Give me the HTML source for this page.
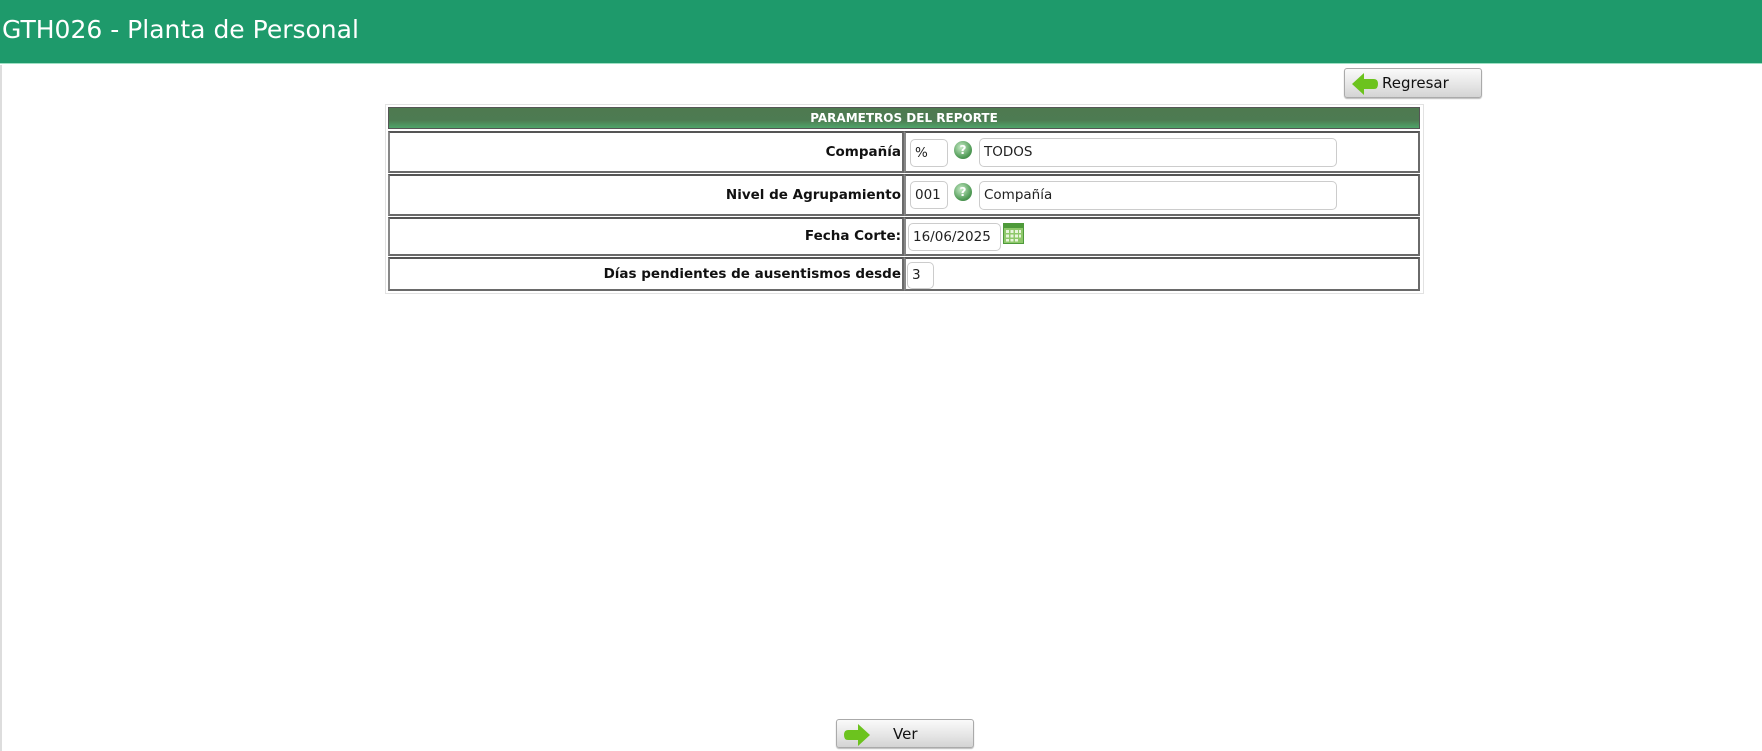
<!DOCTYPE html>
<html><head><meta charset="utf-8"><style>
*{box-sizing:border-box;margin:0;padding:0}
body{width:1762px;height:751px;background:#fff;font-family:"DejaVu Sans","Liberation Sans",sans-serif;position:relative;overflow:hidden}
.hdr{position:absolute;left:0;top:0;width:1762px;height:64px;background:#1e9a6b;border-bottom:1px solid #9fe0c4}
.hdr span{position:absolute;left:2px;top:15px;color:#fff;font-size:25px;font-family:"DejaVu Sans",sans-serif}
.lb{position:absolute;left:0;top:65px;width:2px;height:686px;background:#ddd}
.btn{position:absolute;border:1px solid #aaa;border-radius:3px;background:linear-gradient(#fafafa,#e4e4e4 60%,#d4d4d4);font-size:15px;color:#111;box-shadow:0 1px 1px #bbb}
.btn svg{position:absolute;left:6px;top:3px}
.box{position:absolute;left:385px;top:104px;width:1039px;height:190px;border:1px solid #e2e2e2}
.bar{position:absolute;left:388px;top:107px;width:1032px;height:22px;background:linear-gradient(#4e7a50,#4d7b52 60%,#4fa56a);border:1px solid #555;color:#fff;font-weight:bold;font-size:12px;text-align:center;line-height:20px}
.cell{position:absolute;border:2px solid #6a6a6a;border-top-color:#555;border-left-color:#888}
.lab{font-weight:bold;font-size:13.5px;color:#111;text-align:right;padding-right:1px}
.inp{position:absolute;border:1px solid #ccc;border-radius:5px;background:#fff;font-size:13.5px;padding-left:4px;color:#222}
.help{position:absolute;width:18px;height:18px;border-radius:50%;background:radial-gradient(circle at 40% 35%,#c8ecc8,#4f9a55 65%,#2f7035);color:#fff;font-size:12px;font-weight:bold;text-align:center;line-height:18px}
</style></head><body>
<div class="hdr"><span>GTH026 - Planta de Personal</span></div>
<div class="lb"></div>
<div class="btn" style="left:1344px;top:68px;width:138px;height:30px"><svg width="28" height="24" viewBox="0 0 28 24"><path d="M1 12 L13 1 L13 7 L23 7 Q27 7 27 12 Q27 17 23 17 L13 17 L13 23 Z" fill="#6cc31e"/></svg><span style="position:absolute;left:37px;top:5px">Regresar</span></div>
<div class="box"></div>
<div class="bar">PARAMETROS DEL REPORTE</div>

<div class="cell lab" style="left:388px;top:131px;width:516px;height:42px;line-height:38px">Compañía</div>
<div class="cell" style="left:904px;top:131px;width:516px;height:42px"></div>
<div class="cell lab" style="left:388px;top:174px;width:516px;height:42px;line-height:38px">Nivel de Agrupamiento</div>
<div class="cell" style="left:904px;top:174px;width:516px;height:42px"></div>
<div class="cell lab" style="left:388px;top:217px;width:516px;height:39px;line-height:35px">Fecha Corte:</div>
<div class="cell" style="left:904px;top:217px;width:516px;height:39px"></div>
<div class="cell lab" style="left:388px;top:257px;width:516px;height:34px;line-height:30px">Días pendientes de ausentismos desde</div>
<div class="cell" style="left:904px;top:257px;width:516px;height:34px"></div>

<div class="inp" style="left:910px;top:139px;width:38px;height:28px;line-height:26px">%</div>
<div class="help" style="left:954px;top:141px">?</div>
<div class="inp" style="left:979px;top:138px;width:358px;height:29px;line-height:27px">TODOS</div>
<div class="inp" style="left:910px;top:181px;width:38px;height:28px;line-height:26px">001</div>
<div class="help" style="left:954px;top:183px">?</div>
<div class="inp" style="left:979px;top:181px;width:358px;height:29px;line-height:27px">Compañía</div>
<div class="inp" style="left:908px;top:223px;width:93px;height:28px;line-height:26px">16/06/2025</div>
<svg style="position:absolute;left:1003px;top:223px" width="21" height="21" viewBox="0 0 21 21"><rect x="0.5" y="0.5" width="20" height="20" fill="#8ec86a" stroke="#4e9a3a"/><rect x="1" y="1" width="19" height="4" fill="#4e9a3a"/><g fill="#e8f5dc"><rect x="3" y="7" width="3" height="3"/><rect x="7.5" y="7" width="3" height="3"/><rect x="12" y="7" width="3" height="3"/><rect x="16" y="7" width="2" height="3"/><rect x="3" y="11.5" width="3" height="3"/><rect x="7.5" y="11.5" width="3" height="3"/><rect x="12" y="11.5" width="3" height="3"/><rect x="16" y="11.5" width="2" height="3"/><rect x="3" y="16" width="3" height="2.5"/><rect x="7.5" y="16" width="3" height="2.5"/><rect x="12" y="16" width="3" height="2.5"/></g></svg>
<div class="inp" style="left:907px;top:262px;width:27px;height:27px;line-height:25px">3</div>

<div class="btn" style="left:836px;top:719px;width:138px;height:29px"><svg width="28" height="24" viewBox="0 0 28 24"><path d="M27 12 L15 1 L15 7 L5 7 Q1 7 1 12 Q1 17 5 17 L15 17 L15 23 Z" fill="#6cc31e"/></svg><span style="position:absolute;left:56px;top:5px">Ver</span></div>
</body></html>
